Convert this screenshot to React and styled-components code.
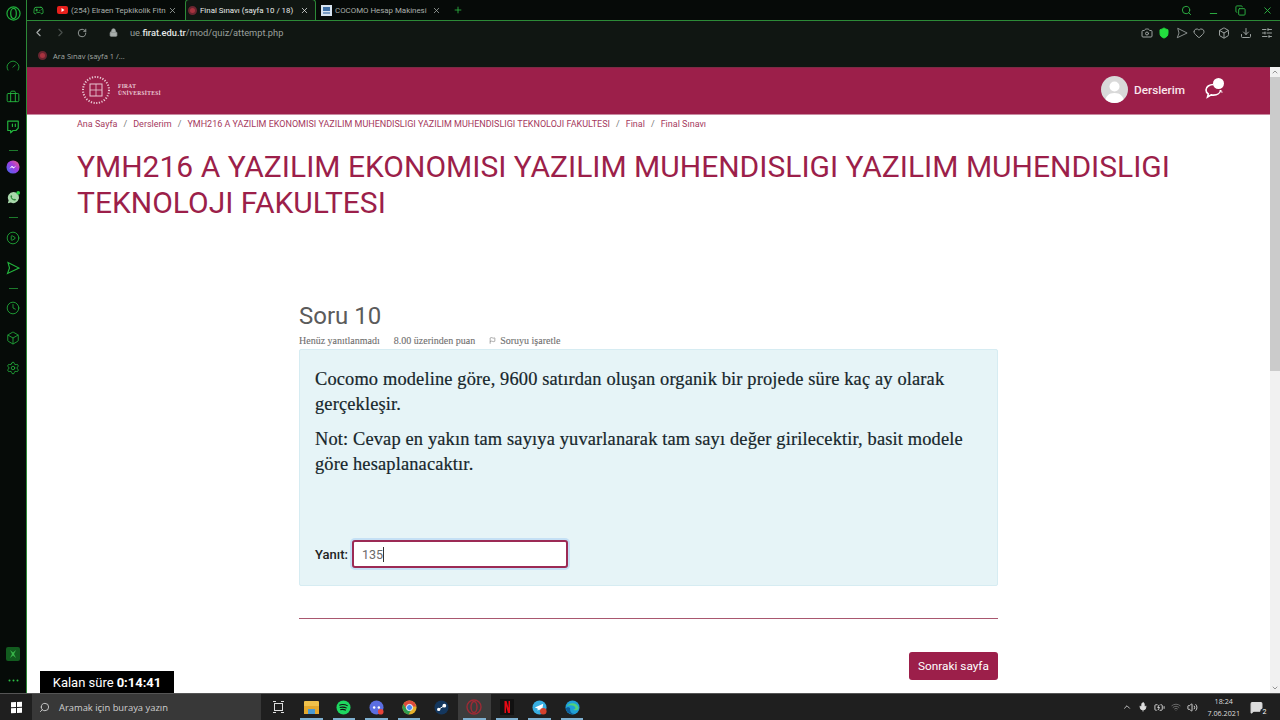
import React from "react";
import styled, { createGlobalStyle } from "styled-components";
import { ChevronLeft, ChevronRight, RotateCw, Lock, Search, Minus, Copy, X, Plus, Camera, ShieldCheck, Heart, Box, Download, SlidersHorizontal, Gauge, Briefcase, Twitch, CirclePlay, Clock, Settings, Gamepad2, ChevronUp, ChevronDown, Flag, Mic, BatteryCharging, Wifi, Volume2, MessageSquare } from "lucide-react";

const Global = createGlobalStyle`
  html, body { margin: 0; padding: 0; width: 1280px; height: 720px; overflow: hidden; background: #fff; }
  body { font-family: Roboto, sans-serif; }
  * { box-sizing: border-box; }
`;

const Screen = styled.div`width:1280px;height:720px;display:flex;flex-direction:column;overflow:hidden;position:relative;`;
const Upper = styled.div`height:693px;display:flex;min-height:0;`;
const Sidebar = styled.aside`width:27px;background:#060b08;border-right:1px solid #2c8a37;display:flex;flex-direction:column;align-items:center;color:#23b53d;flex:none;padding-top:3px;`;
const SideSlot = styled.div`height:${p=>p.$h}px;width:100%;display:flex;align-items:center;justify-content:center;flex:none;`;
const Dash = styled.span`width:9px;height:1px;background:#1d7a2c;display:block;`;
const Spacer = styled.div`flex:1;`;
const Browser = styled.div`flex:1;min-width:0;display:flex;flex-direction:column;`;
const TabStrip = styled.div`height:20px;background:#060a08;display:flex;align-items:flex-end;color:#bcc2be;position:relative;flex:none;`;
const Tab = styled.div`height:${p=>p.$active?21:20}px;width:${p=>p.$w}px;display:flex;align-items:center;gap:3px;padding:0 ${p=>p.$pr||7}px 0 ${p=>p.$pl||4}px;flex:none;white-space:nowrap;color:${p=>p.$active?"#e8ebe9":"#aab0ac"};background:${p=>p.$active?"#101612":"transparent"};border:${p=>p.$active?"1px solid #2c8a37":"none"};border-bottom:none;border-radius:${p=>p.$active?"4px 4px 0 0":"0"};svg{flex:none;}`;
const TabLabel = styled.span`flex:1;min-width:0;white-space:nowrap;font-family:Roboto,sans-serif;font-size:7.9px;`;
const PlusSlot = styled.span`height:20px;margin-left:5px;display:flex;align-items:center;color:#2eb845;`;
const WinControls = styled.div`margin-left:auto;display:flex;align-items:center;gap:16px;height:20px;padding-right:7px;color:#2eb845;`;
const LowIcon = styled.span`display:flex;margin-top:7px;`;
const Toolbar = styled.div`height:24px;background:#101612;border-top:1px solid #2c8a37;display:flex;align-items:center;color:#9ca2a0;flex:none;padding:0;`;
const NavBtn = styled.span`width:22px;display:flex;align-items:center;justify-content:center;flex:none;color:${p=>p.$dim?"#4a504d":"#a8aeac"};`;
const LockSlot = styled.span`width:20px;margin-left:10px;display:flex;align-items:center;justify-content:center;flex:none;`;
const Url = styled.div`font-family:Roboto,sans-serif;font-size:9.25px;color:#9aa09d;margin-left:7px;white-space:nowrap;b{font-weight:500;color:#e4e8e6;}`;
const ToolIcons = styled.div`margin-left:auto;display:flex;align-items:center;gap:13px;padding-right:7px;`;
const ToolGroup = styled.div`display:flex;align-items:center;gap:${p=>p.$gap}px;`;
const Bookmarks = styled.div`height:23px;background:#101612;display:flex;align-items:center;gap:6px;padding-left:11px;flex:none;color:#a2a8a5;font-family:"Open Sans",sans-serif;font-size:7.5px;`;
const Dot = styled.span`width:9px;height:9px;border-radius:50%;background:#a8333f;border:2px solid #6a2530;flex:none;`;
const Viewport = styled.div`flex:1;min-height:0;display:flex;background:#fff;`;
const PageArea = styled.main`flex:1;min-width:0;overflow:hidden;position:relative;`;
const Header = styled.header`height:48px;background:#9c1f4a;display:flex;align-items:center;color:#fff;padding:0 47px 0 54px;border-top:1px solid #7d2a45;border-bottom:1px solid #c98aa0;`;
const Logo = styled.div`display:flex;align-items:center;gap:7px;margin-top:-2px;`;
const LogoText = styled.div`font-family:"Liberation Serif",serif;font-size:5.5px;line-height:7px;font-weight:700;color:#e9c8d3;letter-spacing:.3px;`;
const HeaderRight = styled.div`margin-left:auto;margin-top:-3px;display:flex;align-items:center;`;
const Avatar = styled.div`width:27px;height:27px;border-radius:50%;background:#d9d9d9;display:flex;align-items:flex-end;justify-content:center;overflow:hidden;margin-right:6px;`;
const UserName = styled.span`font-size:11.8px;font-weight:500;color:#f9e6ec;margin-right:20px;`;
const Chat = styled.div`position:relative;width:18px;height:18px;display:flex;`;
const ChatBadge = styled.span`position:absolute;top:-3px;right:-1px;width:11px;height:11px;border-radius:50%;background:#fff;`;
const Content = styled.div`padding:0 100px 0 50px;`;
const Crumbs = styled.nav`display:flex;gap:4px;height:17px;align-items:center;font-size:9px;color:#a53a5e;white-space:nowrap;`;
const CrumbSep = styled.span`color:#777;margin:0 2px;`;
const Title = styled.h1`margin:17px -70px 0 0;font-weight:400;font-size:30px;line-height:36px;color:#9c1f4a;`;
const Question = styled.section`width:699px;margin:81px 0 0 222px;`;
const QNum = styled.h2`font-weight:400;font-size:24px;line-height:28px;margin:0;color:#5b5b5b;`;
const Meta = styled.div`display:flex;align-items:center;gap:14px;height:18px;margin-top:1px;font-family:"Liberation Serif",serif;font-size:10px;color:#6f6f6f;-webkit-text-stroke:.1px #6f6f6f;`;
const FlagWrap = styled.span`display:flex;align-items:center;gap:4px;`;
const QCard = styled.div`height:237px;background:#e6f4f7;border:1px solid #d6ecf2;border-radius:2px;padding:17px 15px 0;display:flex;flex-direction:column;font-family:"Liberation Serif",serif;color:#16262b;`;
const QText = styled.p`margin:0 0 9px;font-size:18.4px;line-height:25.3px;letter-spacing:.15px;-webkit-text-stroke:.2px #16262b;`;
const AnswerRow = styled.div`margin-top:auto;margin-bottom:17px;display:flex;align-items:center;gap:2px;font-family:Roboto,sans-serif;`;
const AnswerLabel = styled.span`font-size:13px;font-weight:500;color:#222;`;
const AnswerBox = styled.div`width:216px;height:28px;background:#fff;border:2px solid #9c2a55;border-radius:3px;box-shadow:0 0 0 2px #c5e0f5;display:flex;align-items:center;padding-left:8px;font-size:12.5px;color:#6a6a6a;margin-left:2px;`;
const Caret = styled.span`width:1px;height:15px;background:#333;`;
const Rule = styled.div`margin-top:32px;height:1px;background:#a9576f;`;
const NextWrap = styled.div`display:flex;justify-content:flex-end;margin-top:33px;`;
const NextBtn = styled.button`width:89px;height:28px;background:#9c1f4a;color:#fff;border:none;border-radius:3px;font:400 11.8px Roboto,sans-serif;padding:0;`;
const Timer = styled.div`position:absolute;left:13px;bottom:0;width:134px;height:22px;background:#000;color:#fff;font-size:13px;display:flex;align-items:center;justify-content:center;b{font-weight:700;margin-left:3px;}`;
const Scrollbar = styled.div`width:10px;background:#f1f1f1;display:flex;flex-direction:column;flex:none;color:#666;`;
const ScrollBtn = styled.div`height:10px;display:flex;align-items:center;justify-content:center;flex:none;`;
const Thumb = styled.div`height:294px;background:#cbcbcb;flex:none;`;
const Taskbar = styled.footer`height:27px;background:#1f1f1f;border-top:1px solid #555;display:flex;align-items:center;color:#e4e4e4;flex:none;`;
const StartBtn = styled.div`width:32px;height:100%;display:flex;align-items:center;justify-content:center;`;
const WinLogo = styled.div`display:grid;grid-template-columns:5px 5px;gap:1px;transform:skewY(-3deg);span{width:5px;height:5px;background:#fff;display:block;}`;
const SearchBox = styled.div`width:229px;height:100%;background:#383838;display:flex;align-items:center;gap:9px;padding-left:7px;color:#cfcfcf;font-size:9.4px;font-family:"Open Sans",sans-serif;`;
const TaskIcons = styled.div`display:flex;align-items:center;height:100%;`;
const TaskSlot = styled.div`width:${p=>p.$w||32.6}px;height:100%;display:flex;align-items:center;justify-content:center;position:relative;background:${p=>p.$on?"#3c3c3c":"transparent"};flex:none;`;
const RunBar = styled.span`position:absolute;left:5px;right:5px;bottom:0;height:2px;background:#7fb0d0;`;
const Tray = styled.div`margin-left:auto;display:flex;align-items:center;gap:6px;height:100%;padding-right:14px;color:#ddd;`;
const TrayClock = styled.div`font-family:"Open Sans",sans-serif;font-size:7.2px;line-height:12px;text-align:center;margin:0 4px 0 3px;`;
const Notif = styled.div`position:relative;width:16px;display:flex;`;
const NotifBadge = styled.span`position:absolute;right:-3px;bottom:-3px;width:9px;height:9px;border-radius:50%;background:#222;color:#fff;font-size:7px;display:flex;align-items:center;justify-content:center;`;

const Circ = ({ c, children }) => (
  <svg width="15" height="15" viewBox="0 0 16 16"><circle cx="8" cy="8" r="7.5" fill={c} />{children}</svg>
);
const Plane = ({ size, width }) => (
  <svg width={size} height={size} viewBox="0 0 14 14" fill="none" stroke="currentColor" strokeWidth={width}><path d="M2 1.500L13 7 1.500 12.500 3.500 7z" /></svg>
);

const S = 14;
export default function App() {
  return (
    <>
      <Global />
      <Screen>
        <Upper>
          <Sidebar>
            <SideSlot $h={20}><svg width="15" height="15" viewBox="0 0 16 16" fill="none" stroke="#1fae3a" strokeWidth="1.3"><circle cx="8" cy="8" r="7" /><ellipse cx="8" cy="8" rx="3" ry="5.4" /></svg></SideSlot>
            <SideSlot $h={28} />
            <SideSlot $h={30}><Gauge size={S} strokeWidth={1.4} /></SideSlot>
            <SideSlot $h={31}><Briefcase size={S} strokeWidth={1.6} /></SideSlot>
            <SideSlot $h={29}><Twitch size={S} strokeWidth={2} /></SideSlot>
            <SideSlot $h={18}><Dash /></SideSlot>
            <SideSlot $h={16}><svg width="14" height="14" viewBox="0 0 16 16"><defs><linearGradient id="ms" x1="0" y1="1" x2="1" y2="0"><stop offset="0" stopColor="#3f6bf0" /><stop offset=".55" stopColor="#a03ce0" /><stop offset="1" stopColor="#f5607a" /></linearGradient></defs><circle cx="8" cy="8" r="7.5" fill="url(#ms)" /><path d="M3.800 10l3-3.400 2 1.700 3-1.900-3 3.400-2-1.600z" fill="#fff" /></svg></SideSlot>
            <SideSlot $h={7} />
            <SideSlot $h={30}><svg width="15" height="15" viewBox="0 0 16 16"><path d="M8 2a6 6 0 0 0-5.200 9L2 14.200l3.200-.8A6 6 0 1 0 8 2z" fill="#a9d8ab" /><path d="M5.700 5.200l1 1.800-.6.8c.6 1 1.200 1.600 2.300 2.100l.8-.7 1.700 1c-.4 1-1.200 1.300-2.100 1-2-.5-3.600-2.300-4-4.100-.1-.8.3-1.500.9-1.900z" fill="#2e8b3c" /><circle cx="13" cy="3" r="2" fill="#2cd24a" /></svg></SideSlot>
            <SideSlot $h={11}><Dash /></SideSlot>
            <SideSlot $h={30}><CirclePlay size={S} strokeWidth={1.4} /></SideSlot>
            <SideSlot $h={30}><Plane size={14} width={1.1} /></SideSlot>
            <SideSlot $h={10}><Dash /></SideSlot>
            <SideSlot $h={30}><Clock size={S} strokeWidth={1.4} /></SideSlot>
            <SideSlot $h={30}><Box size={S} strokeWidth={1.4} /></SideSlot>
            <SideSlot $h={30}><Settings size={S} strokeWidth={1.4} /></SideSlot>
            <Spacer />
            <SideSlot $h={16}><svg width="14" height="14" viewBox="0 0 14 14"><rect width="14" height="14" rx="2" fill="#125c1f" /><path d="M4 3l2 4-2 4 3-2.500 3 2.500-2-4 2-4-3 2.500z" fill="#39b54a" /></svg></SideSlot>
            <SideSlot $h={25} style={{ marginTop: 6 }}><svg width="11" height="3" viewBox="0 0 11 3" fill="#2cc045"><circle cx="1.500" cy="1.500" r="1" /><circle cx="5.500" cy="1.500" r="1" /><circle cx="9.500" cy="1.500" r="1" /></svg></SideSlot>
          </Sidebar>
          <Browser>
            <TabStrip>
              <Tab $w={25} $pl={6}><Gamepad2 size={11} color="#2eb845" /></Tab>
              <Tab $w={133} $pl={5} $pr={8}>
                <svg width="11" height="8" viewBox="0 0 11 8"><rect width="11" height="8" rx="2" fill="#e8201c" /><path d="M4.500 2l3 2-3 2z" fill="#fff" /></svg>
                <TabLabel>(254) Elraen Tepkikolik Fitn</TabLabel>
                <X size={9} />
              </Tab>
              <Tab $active $w={131} $pl={2} $pr={6}>
                <Dot />
                <TabLabel>Final Sınavı (sayfa 10 / 18)</TabLabel>
                <X size={9} />
              </Tab>
              <Tab $w={132} $pl={5} $pr={7}>
                <svg width="11" height="11" viewBox="0 0 11 11"><rect width="11" height="11" fill="#d7e3ef" /><rect x="2" y="2" width="7" height="4" fill="#3d6ea5" /><rect x="2" y="7" width="7" height="2" fill="#7a9cc2" /></svg>
                <TabLabel>COCOMO Hesap Makinesi</TabLabel>
                <X size={9} />
              </Tab>
              <PlusSlot><Plus size={10} /></PlusSlot>
              <WinControls>
                <Search size={11} />
                <LowIcon><Minus size={11} /></LowIcon>
                <Copy size={11} />
                <X size={11} />
              </WinControls>
            </TabStrip>
            <Toolbar>
              <NavBtn><ChevronLeft size={13} /></NavBtn>
              <NavBtn $dim><ChevronRight size={13} /></NavBtn>
              <NavBtn><RotateCw size={10} /></NavBtn>
              <LockSlot><Lock size={9} fill="#a8aeac" /></LockSlot>
              <Url>ue.<b>firat.edu.tr</b>/mod/quiz/attempt.php</Url>
              <ToolIcons>
                <ToolGroup $gap={5.5}>
                  <Camera size={12} />
                  <ShieldCheck size={12} color="#23e03f" fill="#23e03f" />
                  <Plane size={12} width={1} />
                  <Heart size={12} />
                </ToolGroup>
                <ToolGroup $gap={9.5}>
                  <Box size={12} />
                  <Download size={12} />
                  <SlidersHorizontal size={12} />
                </ToolGroup>
              </ToolIcons>
            </Toolbar>
            <Bookmarks><Dot />Ara Sınav (sayfa 1 /...</Bookmarks>
            <Viewport>
              <PageArea>
                <Header>
                  <Logo>
                    <svg width="30" height="30" viewBox="0 0 30 30" fill="none" stroke="#e9c8d3"><circle cx="15" cy="15" r="13" strokeDasharray="1.200 1.500" strokeWidth="2" /><rect x="9" y="9" width="12" height="12" strokeWidth="1" /><path d="M15 9v12M9 15h12" strokeWidth=".8" /></svg>
                    <LogoText>FIRAT<br />ÜNİVERSİTESİ</LogoText>
                  </Logo>
                  <HeaderRight>
                    <Avatar><svg width="27" height="27" viewBox="0 0 27 27" fill="#fff"><circle cx="13.500" cy="10.500" r="5" /><path d="M4 27c0-7 4-10 9.500-10S23 20 23 27z" /></svg></Avatar>
                    <UserName>Derslerim</UserName>
                    <Chat>
                      <svg width="18" height="18" viewBox="0 0 18 18" fill="none" stroke="#fff" strokeWidth="1.600"><path d="M8.500 3.500C4.500 3.500 1 5.700 1 9c0 1.600.9 3 2.300 3.900L2.500 16l3.700-2.100c.8.200 1.500.2 2.300.2 3.800 0 7-2 7-5.100" /><path d="M15.500 9c1 .8 1.500 1.800 1.500 2.800" strokeWidth="1" /></svg>
                      <ChatBadge />
                    </Chat>
                  </HeaderRight>
                </Header>
                <Content>
                  <Crumbs>
                    <span>Ana Sayfa</span><CrumbSep>/</CrumbSep>
                    <span>Derslerim</span><CrumbSep>/</CrumbSep>
                    <span>YMH216 A YAZILIM EKONOMISI YAZILIM MUHENDISLIGI YAZILIM MUHENDISLIGI TEKNOLOJI FAKULTESI</span><CrumbSep>/</CrumbSep>
                    <span>Final</span><CrumbSep>/</CrumbSep>
                    <span>Final Sınavı</span>
                  </Crumbs>
                  <Title>YMH216 A YAZILIM EKONOMISI YAZILIM MUHENDISLIGI YAZILIM MUHENDISLIGI TEKNOLOJI FAKULTESI</Title>
                  <Question>
                    <QNum>Soru 10</QNum>
                    <Meta>
                      <span>Henüz yanıtlanmadı</span>
                      <span>8.00 üzerinden puan</span>
                      <FlagWrap><Flag size={7} />Soruyu işaretle</FlagWrap>
                    </Meta>
                    <QCard>
                      <QText>Cocomo modeline göre, 9600 satırdan oluşan organik bir projede süre kaç ay olarak gerçekleşir.</QText>
                      <QText>Not: Cevap en yakın tam sayıya yuvarlanarak tam sayı değer girilecektir, basit modele göre hesaplanacaktır.</QText>
                      <AnswerRow>
                        <AnswerLabel>Yanıt:</AnswerLabel>
                        <AnswerBox>135<Caret /></AnswerBox>
                      </AnswerRow>
                    </QCard>
                    <Rule />
                    <NextWrap><NextBtn>Sonraki sayfa</NextBtn></NextWrap>
                  </Question>
                </Content>
                <Timer>Kalan süre <b>0:14:41</b></Timer>
              </PageArea>
              <Scrollbar>
                <ScrollBtn><ChevronUp size={8} /></ScrollBtn>
                <Thumb />
                <Spacer />
                <ScrollBtn><ChevronDown size={8} /></ScrollBtn>
              </Scrollbar>
            </Viewport>
          </Browser>
        </Upper>
        <Taskbar>
          <StartBtn><WinLogo><span /><span /><span /><span /></WinLogo></StartBtn>
          <SearchBox><Search size={11} style={{ transform: "scaleX(-1)" }} />Aramak için buraya yazın</SearchBox>
          <TaskIcons>
            <TaskSlot $w={34}><svg width="13" height="12" viewBox="0 0 13 12" fill="none" stroke="#ddd"><rect x="2.500" y="2.500" width="8" height="7" /><path d="M1 .5h3M9 .5h3M1 11.500h3M9 11.500h3" /></svg></TaskSlot>
            <TaskSlot><svg width="15" height="13" viewBox="0 0 15 13"><rect width="15" height="13" rx="1" fill="#f0c14b" /><rect y="5" width="15" height="8" fill="#e4a82c" /><rect x="4" y="8" width="7" height="5" fill="#4a9ad4" /></svg><RunBar /></TaskSlot>
            <TaskSlot><Circ c="#1ed760"><path d="M3.500 5.500c3-1 6-.8 9 .8M4 8c2.500-.7 5-.5 7.500.7M4.500 10.300c2-.5 4-.4 6 .6" stroke="#111" fill="none" strokeWidth="1.100" /></Circ><RunBar /></TaskSlot>
            <TaskSlot><Circ c="#5b6ee1"><circle cx="5.500" cy="8" r="1.300" fill="#fff" /><circle cx="10.500" cy="8" r="1.300" fill="#fff" /><circle cx="12.500" cy="12.500" r="3" fill="#e8443a" /></Circ><RunBar /></TaskSlot>
            <TaskSlot><svg width="15" height="15" viewBox="0 0 16 16"><circle cx="8" cy="8" r="7.500" fill="#e7b02a" /><path d="M8 .5A7.500 7.500 0 0 0 1.500 4.300L5 10l1-3h9A7.500 7.500 0 0 0 8 .5z" fill="#dd4b3e" /><path d="M1.500 4.300A7.500 7.500 0 0 0 7 15.400L10 10 5 10z" fill="#2f9e4f" /><circle cx="8" cy="8" r="3.300" fill="#4a8af4" stroke="#fff" /></svg><RunBar /></TaskSlot>
            <TaskSlot><Circ c="#14375e"><circle cx="11" cy="6" r="2" fill="#fff" /><circle cx="5" cy="10" r="1.800" fill="#fff" /><path d="M5 10l6-4" stroke="#fff" /></Circ></TaskSlot>
            <TaskSlot $on><svg width="16" height="16" viewBox="0 0 16 16" fill="none" stroke="#9e2a35" strokeWidth="1.400"><circle cx="8" cy="8" r="7" /><ellipse cx="8" cy="8" rx="3" ry="5.500" /></svg><RunBar /></TaskSlot>
            <TaskSlot><svg width="14" height="16" viewBox="0 0 14 16"><rect width="14" height="16" fill="#111" /><path d="M4.500 2h2l2 7V2h1.500v12h-2l-2-7v7H4.500z" fill="#e50914" /></svg><RunBar /></TaskSlot>
            <TaskSlot><Circ c="#37aee2"><path d="M3 8l9-4-1.500 8-3-2-1.500 1.500V9z" fill="#fff" /><circle cx="12" cy="12" r="3.500" fill="#d6412b" /></Circ><RunBar /></TaskSlot>
            <TaskSlot><svg width="15" height="15" viewBox="0 0 16 16"><circle cx="8" cy="8" r="7.500" fill="#1f9fd8" /><path d="M2 7C3 3 12 1 14.500 8c.3 2-1.500 3-3.500 3-1.500 0-2-.5-2-1 2 0 2.500-1 2-2C9.500 5 4 5 2 7z" fill="#4fd17a" /><path d="M1 9c0 4 5 7 9 6-3-.5-5-3-4.500-6C5 7.500 2 7 1 9z" fill="#0d5e9c" /></svg><RunBar /></TaskSlot>
          </TaskIcons>
          <Tray>
            <ChevronUp size={10} />
            <Mic size={10} fill="#ddd" />
            <BatteryCharging size={11} />
            <Wifi size={10} color="#777" />
            <Volume2 size={11} />
            <TrayClock>18:24<br />7.06.2021</TrayClock>
            <Notif><MessageSquare size={13} fill="#ddd" /><NotifBadge>2</NotifBadge></Notif>
          </Tray>
        </Taskbar>
      </Screen>
    </>
  );
}
